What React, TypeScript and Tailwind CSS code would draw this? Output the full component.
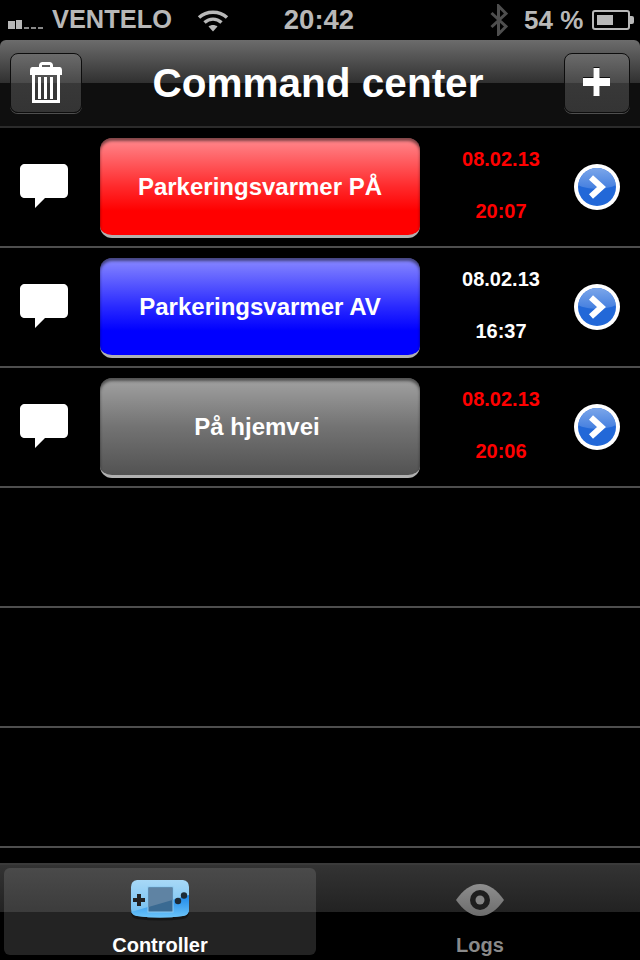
const font = "font-['Liberation_Sans',Arial,sans-serif]"

const rows = [
  { label: "Parkeringsvarmer PÅ", date: "08.02.13", time: "20:07", color: "text-[#ff0000]", button: "bg-[linear-gradient(#ff8a8f,#ff2a2c_50%,#ff0000_75%,#ff0000)]" },
  { label: "Parkeringsvarmer AV", date: "08.02.13", time: "16:37", color: "text-white", button: "bg-[linear-gradient(#8a8aff,#2a2aff_50%,#0000ff_75%,#0000ff)]" },
  { label: "På hjemvei", date: "08.02.13", time: "20:06", color: "text-[#ff0000]", button: "bg-[linear-gradient(#a2a2a2,#737373_50%,#525252)] pr-[6px]" },
]

function Signal() {
  return (
    <div className="mt-2 flex h-[10px] w-[38px] items-end gap-[1px]">
      <div className="h-[8px] w-[7px] bg-[#b8b8b8]" />
      <div className="h-[9px] w-[6px] bg-[#b8b8b8]" />
      <div className="ml-[1px] h-[2px] w-[5px] bg-[#888]" />
      <div className="ml-[1px] h-[2px] w-[5px] bg-[#888]" />
      <div className="ml-[1px] h-[2px] w-[5px] bg-[#888]" />
    </div>
  )
}

function Wifi() {
  return (
    <svg width="32" height="24" viewBox="0 0 32 24" fill="none" stroke="#b8b8b8" strokeWidth="3.4">
      <path d="M2 9.500C9.500 2.500 22.500 2.500 30 9.500" />
      <path d="M7.500 14.500C12.500 10 19.500 10 24.500 14.500" />
      <path d="M16 23.500L11.500 18.500C14 16.500 18 16.500 20.500 18.500Z" fill="#b8b8b8" stroke="none" />
    </svg>
  )
}

function Bluetooth() {
  return (
    <svg width="18" height="32" viewBox="0 0 18 32" fill="none" stroke="#4e4e4e" strokeWidth="3">
      <path d="M1.500 9L16 22.500L8.500 30V2L16 9.500L1.500 23" />
    </svg>
  )
}

function Battery() {
  return (
    <div className="flex items-center">
      <div className="flex h-[20px] w-[38px] items-center rounded-[3px] border-2 border-[#b8b8b8] px-[3px]">
        <div className="h-[10px] w-[16px] bg-[#b8b8b8]" />
      </div>
      <div className="h-[8px] w-[4px] rounded-r-[2px] bg-[#b8b8b8]" />
    </div>
  )
}

function StatusBar() {
  return (
    <div className="flex h-[40px] items-center bg-black pl-2 pr-[6px] text-[26px] font-bold text-[#b8b8b8]">
      <Signal />
      <span className="ml-[6px] w-[120px] text-[25.4px] leading-none">VENTELO</span>
      <div className="ml-[25px]">
        <Wifi />
      </div>
      <span className="ml-[54px] w-[72px] text-center text-[27.5px] leading-none">20:42</span>
      <div className="ml-[135px]">
        <Bluetooth />
      </div>
      <span className="ml-[16px] w-[62px] leading-none">54 %</span>
      <div className="ml-[6px]">
        <Battery />
      </div>
    </div>
  )
}

function NavButton({ children }: { children: React.ReactNode }) {
  return (
    <div className="flex h-[60px] items-center justify-center rounded-[8px] border border-[#0d0d0d] bg-[linear-gradient(#6b6b6b,#4a4a4a_50%,#383838_50%,#343434)] shadow-[0_1px_0_#4f4f4f]">
      {children}
    </div>
  )
}

function Trash() {
  return (
    <svg width="34" height="42" viewBox="0 0 34 42" fill="white" className="mb-[2px]">
      <path fillRule="evenodd" d="M10 6V4.500C10 2.500 11.500 1 13.500 1H20.500C22.500 1 24 2.500 24 4.500V6H30.500C32 6 33 7 33 9.500V14H31V42H3V14H1V9.500C1 7 2 6 3.500 6ZM13 6H21V4H13ZM6 14V39H28V14Z" />
      <rect x="9" y="16" width="3" height="22" />
      <rect x="15" y="16" width="3" height="22" />
      <rect x="21" y="16" width="3" height="22" />
    </svg>
  )
}

function NavBar() {
  return (
    <div className="flex h-[88px] items-center justify-between rounded-t-[6px] border-b-2 border-[#2b2b2b] bg-[linear-gradient(#6c6c6c,#303030_50%,#0f0f0f_50%,#0f0f0f)] px-[10px]">
      <div className="w-[72px]">
        <NavButton>
          <Trash />
        </NavButton>
      </div>
      <h1 className="mr-[10px] text-[40.5px] font-bold leading-none text-white">Command center</h1>
      <div className="w-[66px]">
        <NavButton>
          <svg width="27" height="28" viewBox="0 0 27 28" fill="white" className="mb-[2px] drop-shadow-[0_-1px_0_rgba(0,0,0,0.8)]">
            <rect x="0" y="10" width="27" height="8" />
            <rect x="10.500" y="0" width="6" height="28" />
          </svg>
        </NavButton>
      </div>
    </div>
  )
}

function Bubble() {
  return (
    <svg width="48" height="44" viewBox="0 0 48 44">
      <path d="M5 0H43C46 0 48 2 48 5V29C48 32 46 34 43 34H25L15 44V34H5C2 34 0 32 0 29V5C0 2 2 0 5 0Z" fill="white" />
    </svg>
  )
}

function Disclosure() {
  return (
    <svg width="46" height="46" viewBox="0 0 46 46">
      <defs>
        <linearGradient id="gloss" x1="0" y1="0" x2="0" y2="1">
          <stop offset="0" stopColor="#7ba6ea" />
          <stop offset="1" stopColor="#447fdf" />
        </linearGradient>
      </defs>
      <circle cx="23" cy="23" r="23" fill="white" />
      <circle cx="23" cy="23" r="19" fill="#2268d8" />
      <path d="M4.500 21C4.500 12 13 4 23 4C33 4 41.500 12 41.500 21C34 26 12 26 4.500 21Z" fill="url(#gloss)" />
      <path d="M17 13.500L27.500 23L17 32.500" fill="none" stroke="white" strokeWidth="6" />
    </svg>
  )
}

function Row({ label, date, time, color, button }: (typeof rows)[number]) {
  return (
    <div className="flex h-[120px] items-center border-b-2 border-[#4e4e4e] pl-5">
      <div className="mb-[2px] flex w-[48px]">
        <Bubble />
      </div>
      <div className={`ml-[32px] mt-[2px] flex h-[100px] w-[320px] items-center justify-center rounded-[12px] border-b-[3px] border-[#b0b0b0] shadow-[inset_0_3px_3px_rgba(0,0,0,0.5)] ${button}`}>
        <span className="text-[24px] font-bold text-white">{label}</span>
      </div>
      <div className={`mb-[4px] ml-[20px] flex w-[122px] flex-col items-center gap-[28px] text-[20px] font-bold leading-[24px] ${color}`}>
        <span>{date}</span>
        <span>{time}</span>
      </div>
      <div className="ml-[12px]">
        <Disclosure />
      </div>
    </div>
  )
}

function GameIcon() {
  return (
    <svg width="62" height="42" viewBox="0 0 62 42">
      <defs>
        <linearGradient id="gba" x1="0" y1="0" x2="0" y2="1">
          <stop offset="0" stopColor="#a9d9f7" />
          <stop offset="1" stopColor="#6dbdf0" />
        </linearGradient>
        <linearGradient id="gbaLow" x1="0" y1="0" x2="0" y2="1">
          <stop offset="0" stopColor="#1a86ea" />
          <stop offset="1" stopColor="#6cc4f8" />
        </linearGradient>
      </defs>
      <path d="M8 3Q31 1 54 3Q60 4 60 10V32Q60 38 54 39Q31 42 8 39Q2 38 2 32V10Q2 4 8 3Z" fill="#000" opacity="0.4" />
      <path d="M8 0Q31 -2 54 0Q60 1 60 7V29Q60 35 54 36Q31 39 8 36Q2 35 2 29V7Q2 1 8 0Z" fill="url(#gba)" />
      <path d="M2 32L60 15V29Q60 35 54 36Q31 39 8 36Q4 35 2 32Z" fill="url(#gbaLow)" />
      <rect x="19" y="7" width="25" height="25" fill="#3a6a92" stroke="#8cc8ee" />
      <path d="M19.500 7.500H43.500V20L19.500 27Z" fill="#5f83a3" />
      <path d="M8 14H12V18H16V22H12V26H8V22H4V18H8Z" fill="#222" />
      <circle cx="49" cy="21" r="3.200" fill="#1d2a35" />
      <circle cx="55" cy="15.500" r="3.200" fill="#1d2a35" />
    </svg>
  )
}

function EyeIcon() {
  return (
    <svg width="50" height="34" viewBox="0 0 50 34">
      <defs>
        <linearGradient id="eye" x1="0" y1="0" x2="0" y2="1">
          <stop offset="0" stopColor="#8e8e8e" />
          <stop offset="1" stopColor="#6c6c6c" />
        </linearGradient>
      </defs>
      <path d="M1 17C8 7 16 1 25 1C34 1 42 7 49 17C42 27 34 33 25 33C16 33 8 27 1 17Z" fill="url(#eye)" />
      <circle cx="25" cy="17" r="10" fill="#1e1e1e" />
      <circle cx="25" cy="17" r="4.500" fill="#858585" />
    </svg>
  )
}

function TabBar() {
  return (
    <div className="grid h-[97px] grid-cols-2 border-t-2 border-[#3a3a3a] bg-[linear-gradient(#333333,#222222_50%,#000000_50%,#000000)] pb-[5px] pl-1 pt-[3px]">
      <div className="flex w-[312px] flex-col items-center rounded-[6px] bg-[linear-gradient(#4a4a4a,#3c3c3c_50%,#232323_50%,#232323)] pt-[12px]">
        <GameIcon />
        <span className="mt-[13px] text-[20px] font-bold leading-[20px] text-white">Controller</span>
      </div>
      <div className="flex w-[316px] flex-col items-center pt-[15px]">
        <EyeIcon />
        <span className="mt-[18px] text-[20px] font-bold leading-[20px] text-[#8a8a8a]">Logs</span>
      </div>
    </div>
  )
}

export default function App() {
  return (
    <div className={`flex h-[960px] w-[640px] flex-col overflow-hidden bg-black ${font}`}>
      <StatusBar />
      <NavBar />
      <div className="h-[735px] overflow-hidden">
        {rows.map((r) => (
          <Row key={r.label} {...r} />
        ))}
        <div className="h-[120px] border-b-2 border-[#4e4e4e]" />
        <div className="h-[120px] border-b-2 border-[#4e4e4e]" />
        <div className="h-[120px] border-b-2 border-[#4e4e4e]" />
      </div>
      <TabBar />
    </div>
  )
}
